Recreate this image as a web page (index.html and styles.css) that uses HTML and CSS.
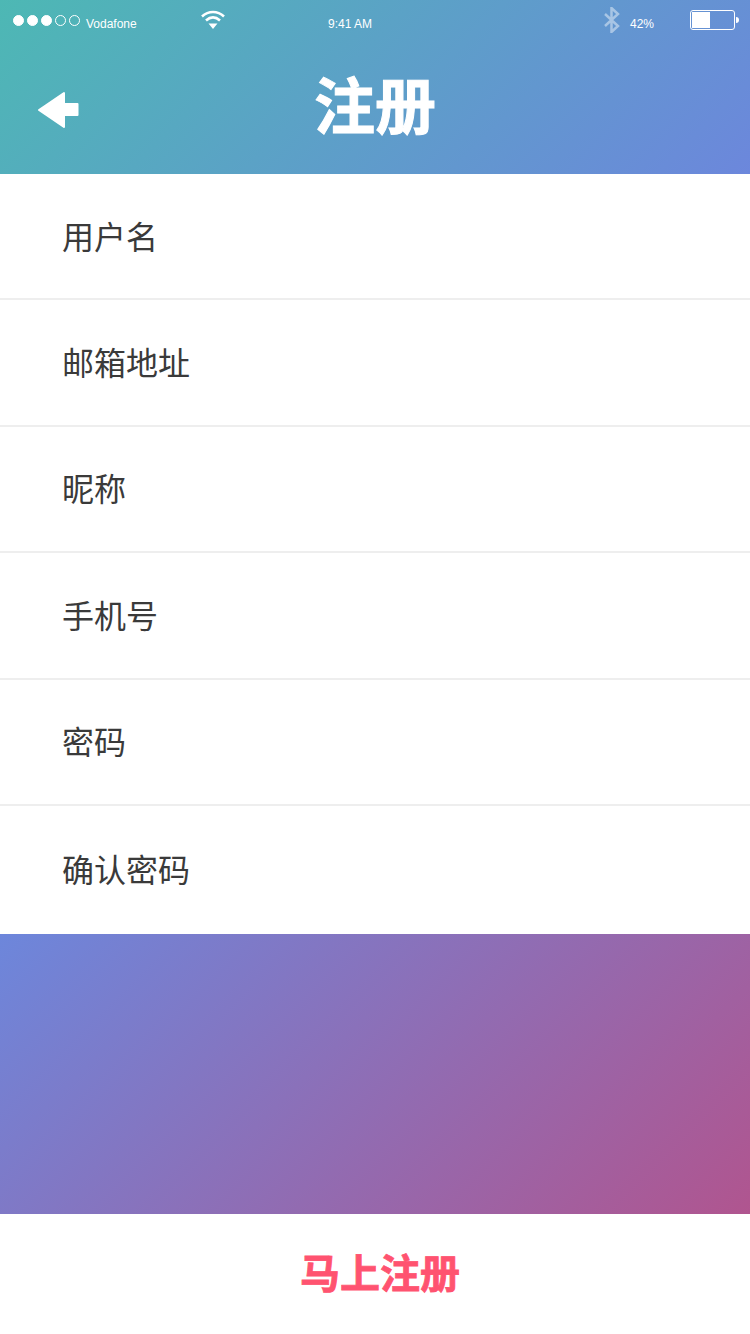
FILE: index.html
```html
<!DOCTYPE html>
<html lang="zh-CN">

<head>
  <meta charset="UTF-8">
  <meta name="viewport" content="width=device-width, initial-scale=1.0">
  <link rel="stylesheet" href="styles.css">
  <title>注册</title>
</head>
<body>
  <div class="screen">
    <div class="header">
      <div class="status">
        <div class="signal">
          <span class="dot on"></span>
          <span class="dot on"></span>
          <span class="dot on"></span>
          <span class="dot"></span>
          <span class="dot"></span>
        </div>
        <span class="carrier">Vodafone</span>
        <svg class="wifi" width="26" height="20" viewBox="0 0 26 20">
          <path d="M2 7.500C8.500 1.500 17.500 1.500 24 7.500" fill="none" stroke="#fff" stroke-width="2.600"/>
          <path d="M6 11.500C10.500 7.500 15.500 7.500 20 11.500" fill="none" stroke="#fff" stroke-width="2.600"/>
          <path d="M8.500 14.500h9L13 20z" fill="#fff"/>
        </svg>
        <span class="time">9:41 AM</span>
        <svg class="bt" width="18" height="26" viewBox="0 0 18 26">
          <path d="M2 7l13 12-6.500 6V1L15 7 2 19" fill="none" stroke="#fff" stroke-opacity="0.45" stroke-width="2.500"/>
        </svg>
        <span class="percent">42%</span>
        <div class="battery"><div class="level"></div></div>
        <div class="nub"></div>
      </div>
      <div class="nav">
        <svg class="back" width="42" height="38" viewBox="0 0 42 38">
          <path d="M2 19L27 2V13H40.500V24H27V36z" fill="#fff" stroke="#fff" stroke-width="2" stroke-linejoin="round"/>
        </svg>
        <h1 class="title">注册</h1>
      </div>
    </div>
    <div class="form">
      <div class="row"><span class="label">用户名</span></div>
      <div class="row"><span class="label">邮箱地址</span></div>
      <div class="row"><span class="label">昵称</span></div>
      <div class="row"><span class="label">手机号</span></div>
      <div class="row"><span class="label">密码</span></div>
      <div class="row"><span class="label">确认密码</span></div>
    </div>
    <div class="gap"></div>
  </div>
  <div class="footer">
    <span class="submit">马上注册</span>
  </div>
</body>
</html>
```

FILE: styles.css
```css
* {
  margin: 0;
  padding: 0;
  box-sizing: border-box;
}

body {
  width: 750px;
  height: 1334px;
  overflow: hidden;
  background: #fff;
  font-family: "Liberation Sans", "Noto Sans CJK SC", sans-serif;
}

.screen {
  height: 1214px;
  display: flex;
  flex-direction: column;
  background: linear-gradient(135deg, #4db8b4 0%, #6c87dc 47%, #b0558f 100%);
}

.header {
  height: 174px;
  color: #fff;
}

.status {
  height: 40px;
  display: flex;
  align-items: center;
  font-size: 12px;
  padding-left: 13px;
}

.signal {
  display: flex;
  gap: 3px;
}

.dot {
  width: 11px;
  height: 11px;
  border: 1px solid #fff;
  border-radius: 50%;
}

.dot.on {
  background: #fff;
}

.carrier {
  margin-left: 6px;
  width: 51px;
  padding-top: 7px;
}

.wifi {
  margin-left: 63px;
  margin-top: -3px;
}

.time {
  margin-left: 102px;
  width: 44px;
  padding-top: 7px;
  white-space: nowrap;
}

.bt {
  margin-left: 231px;
}

.percent {
  margin-left: 9px;
  width: 24px;
  padding-top: 7px;
}

.battery {
  margin-left: 36px;
  width: 45px;
  height: 20px;
  border: 1px solid #fff;
  border-radius: 3px;
  padding: 1px;
}

.level {
  width: 18px;
  height: 16px;
  background: #fff;
}

.nub {
  width: 3px;
  height: 6px;
  margin-left: 1px;
  background: #fff;
  border-radius: 0 3px 3px 0;
}

.nav {
  height: 134px;
  position: relative;
  display: flex;
  justify-content: center;
  align-items: center;
}

.title {
  font-family: "Noto Sans CJK SC", sans-serif;
  font-size: 61px;
  font-weight: 700;
  line-height: 1;
  margin-top: -9px;
  -webkit-text-stroke: 1px #fff;
}

.back {
  position: absolute;
  left: 37px;
  top: 51px;
}

.form {
  height: 760px;
  background: #fff;
  display: flex;
  flex-direction: column;
}

.row {
  height: 126.400px;
  display: flex;
  align-items: center;
  padding-left: 62px;
  border-bottom: 2px solid #eeeeee;
  font-family: "Noto Sans CJK SC", sans-serif;
  font-size: 32px;
  font-weight: 400;
  color: #3a3a3a;
}

.row:last-child {
  height: 128px;
  border-bottom: 0;
}

.label {
  margin-top: -3px;
}

.gap {
  flex: 1;
}

.footer {
  height: 120px;
  display: flex;
  justify-content: center;
  align-items: center;
  padding-left: 10px;
}

.submit {
  font-family: "Noto Sans CJK SC", sans-serif;
  font-size: 40px;
  font-weight: 700;
  color: #ff5370;
  margin-top: -6px;
  -webkit-text-stroke: 0.8px #ff5370;
}
```
